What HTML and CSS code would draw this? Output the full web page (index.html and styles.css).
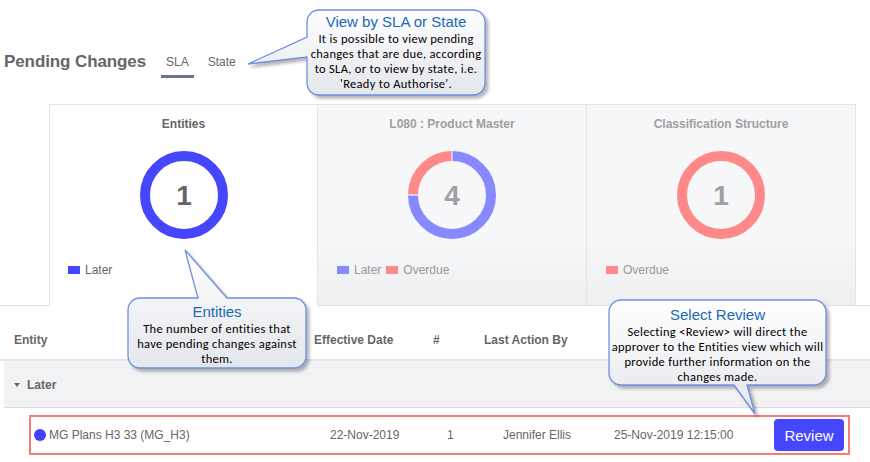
FILE: index.html
```html
<!DOCTYPE html>
<html lang="en">
<head>
<meta charset="utf-8">
<title>Pending Changes</title>
<link rel="stylesheet" href="styles.css">
</head>
<body>
<div class="page">
  <header class="top">
    <h1 class="title">Pending Changes</h1>
    <nav class="tabs">
      <span class="tab active">SLA</span>
      <span class="tab">State</span>
    </nav>
  </header>

  <section class="cards-wrap">
    <div class="cards">
      <div class="card card-active">
        <div class="card-title">Entities</div>
        <svg class="donut" viewBox="0 0 88 88" width="88" height="88">
          <circle cx="44" cy="44" r="39" fill="none" stroke="#4646ff" stroke-width="10"/>
          <text x="44" y="54" text-anchor="middle" class="num num-dark">1</text>
        </svg>
        <div class="legend">
          <span class="key"><i class="sw sw-blue"></i>Later</span>
        </div>
      </div>
      <div class="card">
        <div class="card-title muted">L080 : Product Master</div>
        <svg class="donut" viewBox="0 0 88 88" width="88" height="88">
          <g transform="rotate(-90 44 44)">
            <circle cx="44" cy="44" r="39" fill="none" stroke="#8888ff" stroke-width="10" stroke-dasharray="183.78 245.04"/>
            <circle cx="44" cy="44" r="39" fill="none" stroke="#ff8888" stroke-width="10" stroke-dasharray="61.26 245.04" stroke-dashoffset="-183.78"/>
          </g>
          <line x1="44" y1="0" x2="44" y2="11" stroke="#fff" stroke-width="1"/>
          <line x1="0" y1="44" x2="11" y2="44" stroke="#fff" stroke-width="1"/>
          <text x="44" y="54" text-anchor="middle" class="num">4</text>
        </svg>
        <div class="legend">
          <span class="key"><i class="sw sw-lblue"></i>Later</span>
          <span class="key"><i class="sw sw-red"></i>Overdue</span>
        </div>
      </div>
      <div class="card">
        <div class="card-title muted">Classification Structure</div>
        <svg class="donut" viewBox="0 0 88 88" width="88" height="88">
          <circle cx="44" cy="44" r="39" fill="none" stroke="#ff8888" stroke-width="10"/>
          <text x="44" y="54" text-anchor="middle" class="num">1</text>
        </svg>
        <div class="legend">
          <span class="key"><i class="sw sw-red"></i>Overdue</span>
        </div>
      </div>
    </div>
  </section>

  <section class="grid">
    <div class="grid-head">
      <span class="h h-entity">Entity</span>
      <span class="h h-date">Effective Date</span>
      <span class="h h-count">#</span>
      <span class="h h-by">Last Action By</span>
    </div>
    <div class="group-row"><span class="caret"></span>Later</div>
    <div class="data-row">
      <span class="c c-entity"><i class="dot"></i>MG Plans H3 33 (MG_H3)</span>
      <span class="c c-date">22-Nov-2019</span>
      <span class="c c-count">1</span>
      <span class="c c-by">Jennifer Ellis</span>
      <span class="c c-at">25-Nov-2019 12:15:00</span>
      <button class="review">Review</button>
    </div>
  </section>

  <!-- Callouts -->
  <div class="callout callout-sla">
    <svg class="bubble" width="245" height="94" viewBox="0 0 245 94">
      <defs>
        <linearGradient id="g1" x1="0" y1="0" x2="0" y2="1">
          <stop offset="0" stop-color="#ffffff"/>
          <stop offset="1" stop-color="#e3e6eb"/>
        </linearGradient>
      </defs>
      <path d="M73 2 H227 A12 12 0 0 1 239 14 V75 A12 12 0 0 1 227 87 H73 A12 12 0 0 1 61 75 V49 L2 56 L61 29 V14 A12 12 0 0 1 73 2 Z" fill="url(#g1)" stroke="#6f8fe4" stroke-width="1.3"/>
    </svg>
    <div class="callout-text ct-sla">
      <div class="ct-title">View by SLA or State</div>
      <div class="ct-body">It is possible to view pending<br>changes that are due, according<br>to SLA, or to view by state, i.e.<br>'Ready to Authorise'.</div>
    </div>
  </div>

  <div class="callout callout-ent">
    <svg class="bubble" width="184" height="124" viewBox="0 0 184 124">
      <defs>
        <linearGradient id="g2" x1="0" y1="0" x2="0" y2="1">
          <stop offset="0" stop-color="#ffffff"/>
          <stop offset="1" stop-color="#e3e6eb"/>
        </linearGradient>
      </defs>
      <path d="M14 50 H72 L59 2 L101 50 H168 A12 12 0 0 1 180 62 V108 A12 12 0 0 1 168 120 H14 A12 12 0 0 1 2 108 V62 A12 12 0 0 1 14 50 Z" fill="url(#g2)" stroke="#6f8fe4" stroke-width="1.3"/>
    </svg>
    <div class="callout-text ct-ent">
      <div class="ct-title">Entities</div>
      <div class="ct-body">The number of entities that<br>have pending changes against<br>them.</div>
    </div>
  </div>

  <div class="callout callout-rev">
    <svg class="bubble" width="226" height="120" viewBox="0 0 226 120">
      <defs>
        <linearGradient id="g3" x1="0" y1="0" x2="0" y2="1">
          <stop offset="0" stop-color="#ffffff"/>
          <stop offset="1" stop-color="#e3e6eb"/>
        </linearGradient>
      </defs>
      <path d="M14 2 H207 A12 12 0 0 1 219 14 V75 A12 12 0 0 1 207 87 H140 L148 116 L127 87 H14 A12 12 0 0 1 2 75 V14 A12 12 0 0 1 14 2 Z" fill="url(#g3)" stroke="#6f8fe4" stroke-width="1.3"/>
    </svg>
    <div class="callout-text ct-rev">
      <div class="ct-title">Select Review</div>
      <div class="ct-body">Selecting &lt;Review&gt; will direct the<br>approver to the Entities view which will<br>provide further information on the<br>changes made.</div>
    </div>
  </div>
</div>
</body>
</html>
```

FILE: styles.css
```css
* { box-sizing: border-box; }
html, body { margin: 0; padding: 0; background: #fff; }
body {
  font-family: "Liberation Sans", Arial, sans-serif;
  font-size: 12px;
  color: #666;
}
.page {
  position: relative;
  width: 870px;
  height: 462px;
  overflow: hidden;
}

/* header */
.top {
  height: 104px;
  padding: 49px 0 0 4px;
  display: flex;
  align-items: flex-start;
}
.title {
  margin: 0;
  font-size: 17px;
  line-height: 26px;
  font-weight: bold;
  color: #666;
  letter-spacing: -0.1px;
}
.tabs {
  display: flex;
  gap: 9px;
  margin-left: 15px;
}
.tab {
  padding: 0 5px;
  line-height: 26px;
  font-size: 12px;
  color: #666;
  border-bottom: 3px solid transparent;
}
.tab.active { border-bottom-color: #6b7480; }

/* cards */
.cards-wrap {
  padding-left: 49px;
  border-bottom: 1px solid #e2e2e4;
  height: 202px;
}
.cards {
  display: grid;
  grid-template-columns: 269px 269px 269px;
  height: 202px;
}
.card {
  height: 201px;
  border-top: 1px solid #e5e5e7;
  border-right: 1px solid #e5e5e7;
  background: linear-gradient(#f6f7f9 0%, #f6f7f9 65%, #eeeff1 100%);
  display: flex;
  flex-direction: column;
  align-items: center;
  padding-top: 9px;
}
.card-active {
  background: #fff;
  border-left: 1px solid #e5e5e7;
  height: 202px;
}
.card-title {
  font-weight: bold;
  font-size: 12px;
  line-height: 20px;
  color: #666;
}
.card-title.muted { color: #a0a0a0; }
.donut { margin-top: 17px; display: block; }
.num {
  font-family: "Liberation Sans", Arial, sans-serif;
  font-weight: bold;
  font-size: 28px;
  fill: #a0a0a0;
}
.num-dark { fill: #666; }
.legend {
  align-self: stretch;
  margin-top: 24px;
  padding-left: 18px;
  display: flex;
  gap: 5px;
  line-height: 14px;
}
.card:not(.card-active) .legend { padding-left: 19px; }
.key { display: flex; align-items: center; color: #666; }
.card:not(.card-active) .key { color: #999; }
.sw {
  display: inline-block;
  width: 12px;
  height: 8px;
  margin-right: 5px;
}
.sw-blue { background: #4646ff; }
.sw-lblue { background: #8888ff; }
.sw-red { background: #ff8888; }

/* grid */
.grid-head {
  height: 55px;
  display: flex;
  align-items: center;
  padding: 14px 0 0 14px;
  border-bottom: 2px solid #e6e6e8;
  font-weight: bold;
}
.h-entity { width: 300px; }
.h-date { width: 119px; }
.h-count { width: 51px; }
.h-by { width: 130px; }

.group-row {
  margin-left: 4px;
  height: 47px;
  background: #f1f2f4;
  border-bottom: 1px solid #dedee0;
  display: flex;
  align-items: center;
  padding-left: 10px;
  padding-top: 1px;
  font-weight: bold;
}
.caret {
  width: 0;
  height: 0;
  border-left: 3.5px solid transparent;
  border-right: 3.5px solid transparent;
  border-top: 4px solid #666;
  margin-right: 7px;
}
.data-row {
  margin: 7px 0 0 29px;
  width: 821px;
  height: 40px;
  border: 2px solid #f77b7b;
  display: flex;
  align-items: center;
  color: #666;
}
.c { white-space: nowrap; }
.c-entity { width: 299px; display: flex; align-items: center; padding-left: 3px; }
.dot {
  width: 12px;
  height: 12px;
  border-radius: 50%;
  background: #4040ff;
  margin-right: 3px;
}
.c-date { width: 117px; }
.c-count { width: 56px; }
.c-by { width: 111px; }
.c-at { width: 160px; }
.review {
  width: 70px;
  height: 32px;
  border: 0;
  border-radius: 4px;
  background: #4646ff;
  color: #fff;
  font-family: "Liberation Sans", Arial, sans-serif;
  font-size: 15px;
  padding: 0;
}

/* callouts */
.callout { position: absolute; }
.bubble {
  position: absolute;
  left: 0;
  top: 0;
  filter: drop-shadow(3px 3px 1.5px rgba(0,0,0,0.28));
  overflow: visible;
}
.callout-sla { left: 246px; top: 8px; width: 245px; height: 94px; }
.callout-ent { left: 126px; top: 248px; width: 184px; height: 124px; }
.callout-rev { left: 607px; top: 298px; width: 226px; height: 120px; }
.callout-text {
  position: absolute;
  text-align: center;
  color: #000;
  white-space: nowrap;
}
.ct-sla { left: 61px; top: 5px; width: 178px; }
.ct-ent { left: 2px; top: 55px; width: 178px; }
.ct-rev { left: 2px; top: 8px; width: 217px; }
.ct-title {
  font-family: "Liberation Sans", Arial, sans-serif;
  font-size: 15px;
  line-height: 18px;
  color: #1a6ab3;
}
.ct-body {
  font-family: Carlito, Lato, "Liberation Sans", sans-serif;
  font-size: 12.5px;
  line-height: 15px;
  color: #000;
  letter-spacing: 0.3px;
}
```
